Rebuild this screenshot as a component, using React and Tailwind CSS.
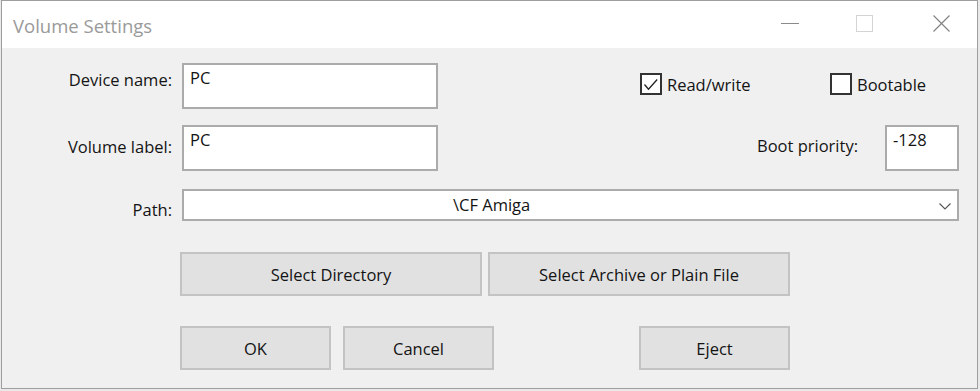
import React from "react";

function Checkbox({ checked }) {
  return (
    <svg width="22" height="22" viewBox="0 0 22 22" className="shrink-0">
      <rect x="1" y="1" width="20" height="20" fill="#fff" stroke="#333" strokeWidth="2" />
      {checked && (
        <polyline points="4.5,11.5 8.5,16.2 17.2,6.5" fill="none" stroke="#222" strokeWidth="1.3" />
      )}
    </svg>
  );
}

function Btn({ children, w, className = "" }) {
  return (
    <div
      className={`${w} h-[44px] bg-[#e1e1e1] border-2 border-[#c3c3c3] flex items-center justify-center pt-[2px] ${className}`}
    >
      {children}
    </div>
  );
}

export default function App() {
  return (
    <div className="w-[980px] h-[391px] bg-[#e9e9e9] font-['Open_Sans',sans-serif] text-[16.5px] leading-[22px] text-[#141414] overflow-hidden">
      <div className="ml-[1px] w-[977px] h-[389px] border border-[#9e9e9e] flex flex-col bg-[#f0f0f0]">
        {/* Title bar */}
        <div className="h-[47px] bg-white flex items-start shrink-0">
          <span className="ml-[11px] mt-[12px] text-[18.5px] leading-[26px] text-[#9a9a9a]">
            Volume Settings
          </span>
          <div className="flex-1" />
          <svg width="18" height="18" viewBox="0 0 18 18" className="mt-[14px]">
            <line x1="0" y1="8.5" x2="18" y2="8.5" stroke="#8a8a8a" strokeWidth="1" />
          </svg>
          <svg width="17" height="18" viewBox="0 0 17 18" className="mt-[14px] ml-[57px]">
            <rect x="0.5" y="0.5" width="16" height="16" fill="none" stroke="#d4d4d4" strokeWidth="1" />
          </svg>
          <svg width="17" height="17" viewBox="0 0 17 17" className="mt-[14px] ml-[60px] mr-[27px]">
            <line x1="0.5" y1="0.5" x2="16.5" y2="16.5" stroke="#808080" strokeWidth="1.1" />
            <line x1="16.5" y1="0.5" x2="0.5" y2="16.5" stroke="#808080" strokeWidth="1.1" />
          </svg>
        </div>

        {/* Content */}
        <div className="flex-1 flex flex-col pr-[18px]">
          {/* Row 1 */}
          <div className="mt-[15px] h-[46px] flex items-start">
            <div className="w-[170px] text-right pt-[6px]">Device name:</div>
            <div className="ml-[10px] w-[256px] h-[46px] border-2 border-[#ababab] bg-white px-[6px] pt-[2px]">
              PC
            </div>
            <div className="ml-[202px] w-[190px] flex items-start pt-[10px]">
              <Checkbox checked />
              <span className="ml-[5px] mt-[1px]">Read/write</span>
            </div>
            <div className="flex items-start pt-[10px]">
              <Checkbox />
              <span className="ml-[5px] mt-[1px]">Bootable</span>
            </div>
          </div>

          {/* Row 2 */}
          <div className="mt-[16px] h-[46px] flex items-start">
            <div className="w-[170px] text-right pt-[11px]">Volume label:</div>
            <div className="ml-[10px] w-[256px] h-[46px] border-2 border-[#ababab] bg-white px-[6px] pt-[2px]">
              PC
            </div>
            <div className="flex-1" />
            <div className="pt-[10px]">Boot priority:</div>
            <div className="ml-[27px] w-[74px] h-[46px] border-2 border-[#ababab] bg-white px-[6px] pt-[2px]">
              -128
            </div>
          </div>

          {/* Path row */}
          <div className="mt-[18px] h-[32px] flex items-start">
            <div className="w-[170px] text-right pt-[10px]">Path:</div>
            <div className="ml-[10px] flex-1 h-[32px] border-2 border-[#ababab] bg-white flex items-start">
              <span className="pl-[269px] pt-[3px]">\CF Amiga</span>
              <div className="flex-1" />
              <svg width="12" height="7" viewBox="0 0 12 7" className="mt-[12px] mr-[6px]">
                <polyline points="0.5,0.5 6,6 11.5,0.5" fill="none" stroke="#555" strokeWidth="1.1" />
              </svg>
            </div>
          </div>

          {/* Buttons row 1 */}
          <div className="mt-[31px] flex">
            <Btn w="w-[302px]" className="ml-[178px]">Select Directory</Btn>
            <Btn w="w-[302px]" className="ml-[6px]">Select Archive or Plain File</Btn>
          </div>

          {/* Buttons row 2 */}
          <div className="mt-[30px] flex">
            <Btn w="w-[151px]" className="ml-[178px]">OK</Btn>
            <Btn w="w-[151px]" className="ml-[12px]">Cancel</Btn>
            <Btn w="w-[151px]" className="ml-[145px]">Eject</Btn>
          </div>
        </div>
      </div>
    </div>
  );
}
